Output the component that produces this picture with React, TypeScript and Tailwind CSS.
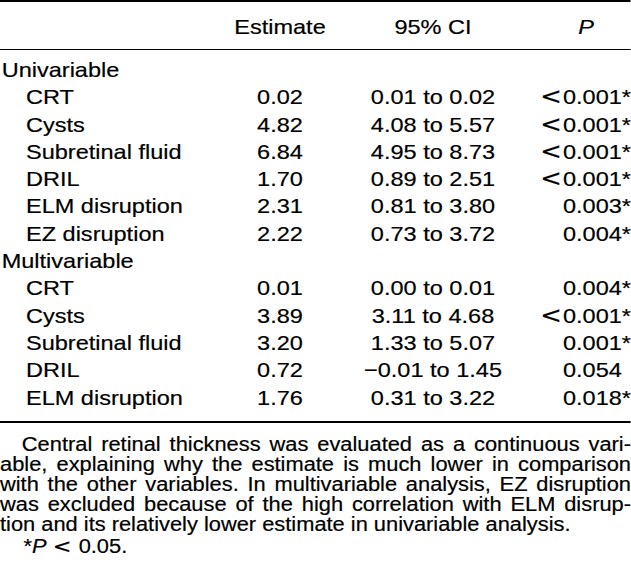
import React from "react";

type Row = { label: string; group?: boolean; est?: string; ci?: string; p?: string; lt?: boolean; star?: boolean };

const rows: Row[] = [
  { label: "Univariable", group: true },
  { label: "CRT", est: "0.02", ci: "0.01 to 0.02", p: "0.001", lt: true, star: true },
  { label: "Cysts", est: "4.82", ci: "4.08 to 5.57", p: "0.001", lt: true, star: true },
  { label: "Subretinal fluid", est: "6.84", ci: "4.95 to 8.73", p: "0.001", lt: true, star: true },
  { label: "DRIL", est: "1.70", ci: "0.89 to 2.51", p: "0.001", lt: true, star: true },
  { label: "ELM disruption", est: "2.31", ci: "0.81 to 3.80", p: "0.003", star: true },
  { label: "EZ disruption", est: "2.22", ci: "0.73 to 3.72", p: "0.004", star: true },
  { label: "Multivariable", group: true },
  { label: "CRT", est: "0.01", ci: "0.00 to 0.01", p: "0.004", star: true },
  { label: "Cysts", est: "3.89", ci: "3.11 to 4.68", p: "0.001", lt: true, star: true },
  { label: "Subretinal fluid", est: "3.20", ci: "1.33 to 5.07", p: "0.001", star: true },
  { label: "DRIL", est: "0.72", ci: "\u22120.01 to 1.45", p: "0.054", star: false },
  { label: "ELM disruption", est: "1.76", ci: "0.31 to 3.22", p: "0.018", star: true },
];

const grid = "grid grid-cols-[178.6px_142.8px_130.4px_111.6px] items-center";

const lt = (size: string) => (
  <span
    className={`${size} leading-none mr-[1px]`}
    style={{ fontFamily: '"DejaVu Sans", sans-serif' }}
  >
    &lt;
  </span>
);

export default function App() {
  return (
    <div className="w-[631px] h-[576px] bg-white text-black overflow-hidden">
      <div
        className="w-[563.4px] origin-top-left [transform:scaleX(1.12)] [-webkit-text-stroke:0.2px_black]"
        style={{ fontFamily: '"Liberation Sans", Arial, sans-serif' }}
      >
        <div className="border-t-2 border-black">
          <div className={`${grid} pt-[11px] pb-[9px] border-b border-black text-[21px] leading-[27px]`}>
            <div></div>
            <div className="text-center">Estimate</div>
            <div className="text-center">95% CI</div>
            <div className="text-right pr-[33px] italic">P</div>
          </div>
          <div className="pt-[6px] pb-[10px] border-b-2 border-black text-[21px] leading-[27.3px]">
            {rows.map((r, i) => (
              <div key={i} className={`${grid} h-[27.3px]`}>
                <div className={r.group ? "pl-[1.5px] whitespace-nowrap" : "pl-[23.2px] whitespace-nowrap"}>{r.label}</div>
                <div className="text-center">{r.est}</div>
                <div className="text-center whitespace-nowrap">{r.ci}</div>
                <div className="text-right whitespace-nowrap">
                  {r.p !== undefined && (
                    <>
                      {r.lt && lt("text-[23px]")}
                      {r.p}
                      <span className={r.star ? "" : "invisible"}>*</span>
                    </>
                  )}
                </div>
              </div>
            ))}
          </div>
        </div>
        <div className="pt-[11px] text-[19.5px] leading-[20px]">
          <div className="pl-[19.5px] text-justify [text-align-last:justify]">Central retinal thickness was evaluated as a continuous vari-</div>
          <div className="text-justify [text-align-last:justify]">able, explaining why the estimate is much lower in comparison</div>
          <div className="text-justify [text-align-last:justify]">with the other variables. In multivariable analysis, EZ disruption</div>
          <div className="text-justify [text-align-last:justify]">was excluded because of the high correlation with ELM disrup-</div>
          <div className="whitespace-nowrap">tion and its relatively lower estimate in univariable analysis.</div>
          <div className="mt-[2px] pl-[21px] whitespace-nowrap">
            *<span className="italic">P</span> {lt("text-[20px]")} 0.05.
          </div>
        </div>
      </div>
    </div>
  );
}
